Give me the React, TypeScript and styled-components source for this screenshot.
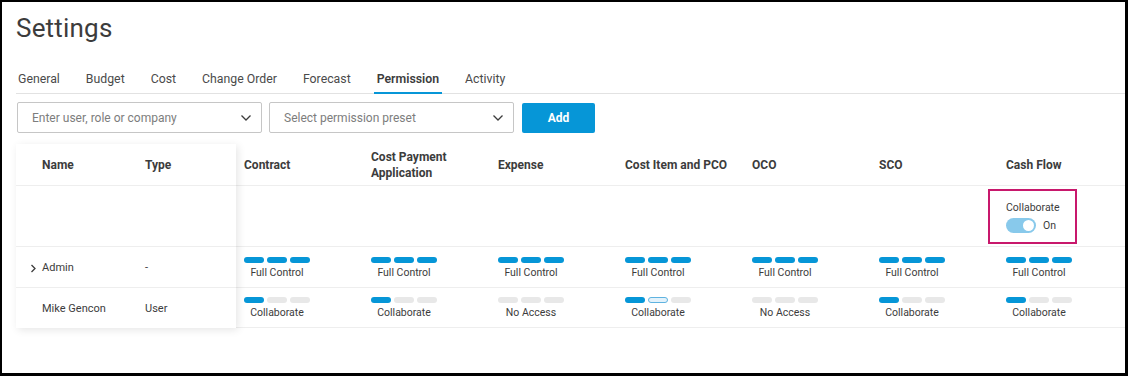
import React from 'react';
import styled, { createGlobalStyle } from 'styled-components';

const GlobalStyle = createGlobalStyle`
  html, body {
    margin: 0;
    padding: 0;
    background: #fff;
  }
  body {
    font-family: Roboto, 'Liberation Sans', sans-serif;
    color: #3c3c3c;
  }
`;

type Level = 'full' | 'collab' | 'collabHalf' | 'none';

const columns = ['Contract', 'Cost Payment Application', 'Expense', 'Cost Item and PCO', 'OCO', 'SCO', 'Cash Flow'];

const rows: { name: string; type: string; expandable: boolean; perms: Level[] }[] = [
  {
    name: 'Admin',
    type: '-',
    expandable: true,
    perms: ['full', 'full', 'full', 'full', 'full', 'full', 'full'],
  },
  {
    name: 'Mike Gencon',
    type: 'User',
    expandable: false,
    perms: ['collab', 'collab', 'none', 'collabHalf', 'none', 'collab', 'collab'],
  },
];

const tabs = ['General', 'Budget', 'Cost', 'Change Order', 'Forecast', 'Permission', 'Activity'];

const labelFor = (l: Level) => (l === 'full' ? 'Full Control' : l === 'none' ? 'No Access' : 'Collaborate');

const pillsFor = (l: Level): ('on' | 'off' | 'half')[] => {
  if (l === 'full') return ['on', 'on', 'on'];
  if (l === 'collab') return ['on', 'off', 'off'];
  if (l === 'collabHalf') return ['on', 'half', 'off'];
  return ['off', 'off', 'off'];
};

const Chevron = () => (
  <svg width='7' height='9' viewBox='0 0 7 9'>
    <path d='M1.5 1 L5 4.5 L1.5 8' fill='none' stroke='#3c3c3c' strokeWidth='1.3' />
  </svg>
);

const Caret = () => (
  <svg width='12' height='8' viewBox='0 0 12 8'>
    <path d='M1.5 1.5 L6 6 L10.5 1.5' fill='none' stroke='#3c3c3c' strokeWidth='1.3' />
  </svg>
);

const App = () => {
  return (
    <Frame>
      <GlobalStyle />
      <Title>Settings</Title>
      <Tabs>
        {tabs.map(t => (
          <Tab key={t} active={t === 'Permission'}>
            {t}
          </Tab>
        ))}
      </Tabs>
      <Toolbar>
        <Select>
          <span>Enter user, role or company</span>
          <Caret />
        </Select>
        <Select>
          <span>Select permission preset</span>
          <Caret />
        </Select>
        <AddButton>Add</AddButton>
      </Toolbar>
      <Table>
        <Frozen>
          <FrozenRow h={42}>
            <NameCell>
              <HeadText>Name</HeadText>
            </NameCell>
            <TypeCell>
              <HeadText>Type</HeadText>
            </TypeCell>
          </FrozenRow>
          <FrozenRow h={61} />
          {rows.map((r, i) => (
            <FrozenRow key={r.name} h={i === 0 ? 41 : 40}>
              <NameCell>
                {r.expandable && (
                  <Expander>
                    <Chevron />
                  </Expander>
                )}
                {r.name}
              </NameCell>
              <TypeCell>{r.type}</TypeCell>
            </FrozenRow>
          ))}
        </Frozen>
        <Grid>
          {columns.map(c => (
            <GridCell key={`h-${c}`} h={42}>
              <HeadText>{c}</HeadText>
            </GridCell>
          ))}
          {columns.map((c, i) => (
            <GridCell key={`t-${c}`} h={61}>
              {i === columns.length - 1 && (
                <Highlight>
                  <SmallLabel>Collaborate</SmallLabel>
                  <ToggleRow>
                    <Toggle />
                    <span>On</span>
                  </ToggleRow>
                </Highlight>
              )}
            </GridCell>
          ))}
          {rows.map((r, ri) =>
            r.perms.map((p, i) => (
              <GridCell key={`${r.name}-${i}`} h={ri === 0 ? 41 : 40}>
                <Perm>
                  <Pills>
                    {pillsFor(p).map((s, k) => (
                      <Pill key={k} state={s} />
                    ))}
                  </Pills>
                  <PermLabel>{labelFor(p)}</PermLabel>
                </Perm>
              </GridCell>
            )),
          )}
        </Grid>
      </Table>
    </Frame>
  );
};

export default App;

const Frame = styled.div`
  width: 1128px;
  height: 376px;
  box-sizing: border-box;
  border: 2px solid #000;
  border-right-width: 3px;
  border-bottom-width: 3px;
  overflow: hidden;
  padding: 0 0 0 14px;
`;

const Title = styled.h1`
  margin: 0;
  padding: 11px 0 0 0;
  height: 39px;
  font-size: 26px;
  font-weight: 400;
  color: #3c3c3c;
  letter-spacing: 0.2px;
`;

const Tabs = styled.div`
  display: flex;
  gap: 26px;
  margin-top: 13px;
  padding-left: 2px;
  border-bottom: 1px solid #e2e2e2;
  height: 29px;
  box-sizing: border-box;
`;

const Tab = styled.div<{ active?: boolean }>`
  font-size: 12.3px;
  line-height: 16px;
  padding-top: 6px;
  height: 28px;
  box-sizing: border-box;
  color: ${p => (p.active ? '#3c3c3c' : '#4a4a4a')};
  font-weight: ${p => (p.active ? 600 : 400)};
  position: relative;
  &::after {
    content: '';
    display: ${p => (p.active ? 'block' : 'none')};
    position: absolute;
    left: -3px;
    right: -3px;
    bottom: -1px;
    height: 2px;
    background: #0696d7;
  }
`;

const Toolbar = styled.div`
  display: flex;
  gap: 7px;
  margin-top: 8px;
  padding-left: 1px;
  align-items: center;
`;

const Select = styled.div`
  width: 245px;
  height: 31px;
  box-sizing: border-box;
  border: 1px solid #c6c6c6;
  border-radius: 2px;
  display: flex;
  align-items: center;
  justify-content: space-between;
  padding: 0 9px 0 14px;
  font-size: 12px;
  color: #7d7d7d;
`;

const AddButton = styled.button`
  width: 73px;
  height: 30px;
  margin-left: 1px;
  border: none;
  border-radius: 2px;
  background: #0696d7;
  color: #fff;
  font-family: Roboto, 'Liberation Sans', sans-serif;
  font-weight: 700;
  font-size: 12px;
`;

const Table = styled.div`
  display: flex;
  margin-top: 11px;
`;

const Frozen = styled.div`
  width: 220px;
  flex: none;
  background: #fff;
  box-shadow: 2px 2px 8px rgba(0, 0, 0, 0.1);
  position: relative;
  z-index: 1;
`;

const FrozenRow = styled.div<{ h: number }>`
  display: flex;
  align-items: center;
  height: ${p => p.h}px;
  border-bottom: 1px solid #eeeeee;
  box-sizing: border-box;
  font-size: 11px;
  &:last-child {
    border-bottom: none;
  }
`;

const NameCell = styled.div`
  width: 121px;
  padding-left: 26px;
  box-sizing: border-box;
  display: flex;
  align-items: center;
  position: relative;
`;

const Expander = styled.span`
  position: absolute;
  left: 14px;
  top: 3px;
  line-height: 0;
`;

const TypeCell = styled.div`
  flex: 1;
  padding-left: 8px;
`;

const HeadText = styled.div`
  font-size: 12px;
  font-weight: 700;
  line-height: 16px;
  color: #3c3c3c;
  padding-right: 16px;
`;

const Grid = styled.div`
  flex: 1;
  display: grid;
  grid-template-columns: repeat(7, 127px);
  align-content: start;
`;

const GridCell = styled.div<{ h: number }>`
  height: ${p => p.h}px;
  box-sizing: border-box;
  border-bottom: 1px solid #eeeeee;
  padding-left: 8px;
  display: flex;
  align-items: center;
`;

const Highlight = styled.div`
  display: flex;
  flex-direction: column;
  align-items: flex-start;
  gap: 4px;
  border: 2px solid #c8186c;
  padding: 10px 15px 9px 16px;
  margin-left: -18px;
`;

const SmallLabel = styled.div`
  font-size: 10.5px;
  line-height: 13px;
  color: #3c3c3c;
`;

const ToggleRow = styled.div`
  display: flex;
  align-items: center;
  gap: 7px;
  font-size: 10.5px;
`;

const Toggle = styled.div`
  width: 30px;
  height: 15px;
  border-radius: 8px;
  background: #88c9eb;
  position: relative;
  &::after {
    content: '';
    position: absolute;
    right: 2px;
    top: 2px;
    width: 11px;
    height: 11px;
    border-radius: 50%;
    background: #fff;
  }
`;

const Perm = styled.div`
  display: flex;
  flex-direction: column;
  align-items: center;
  width: 66px;
  gap: 3px;
  margin-top: 1px;
`;

const Pills = styled.div`
  display: flex;
  gap: 3px;
`;

const Pill = styled.div<{ state: 'on' | 'off' | 'half' }>`
  width: 20px;
  height: 6px;
  border-radius: 3px;
  box-sizing: border-box;
  background: ${p => (p.state === 'on' ? '#0696d7' : p.state === 'half' ? '#e3f2fb' : '#e8e8e8')};
  border: ${p => (p.state === 'half' ? '1px solid #5fb3e0' : 'none')};
`;

const PermLabel = styled.div`
  font-size: 10.5px;
  line-height: 13px;
  color: #3c3c3c;
  white-space: nowrap;
`;
